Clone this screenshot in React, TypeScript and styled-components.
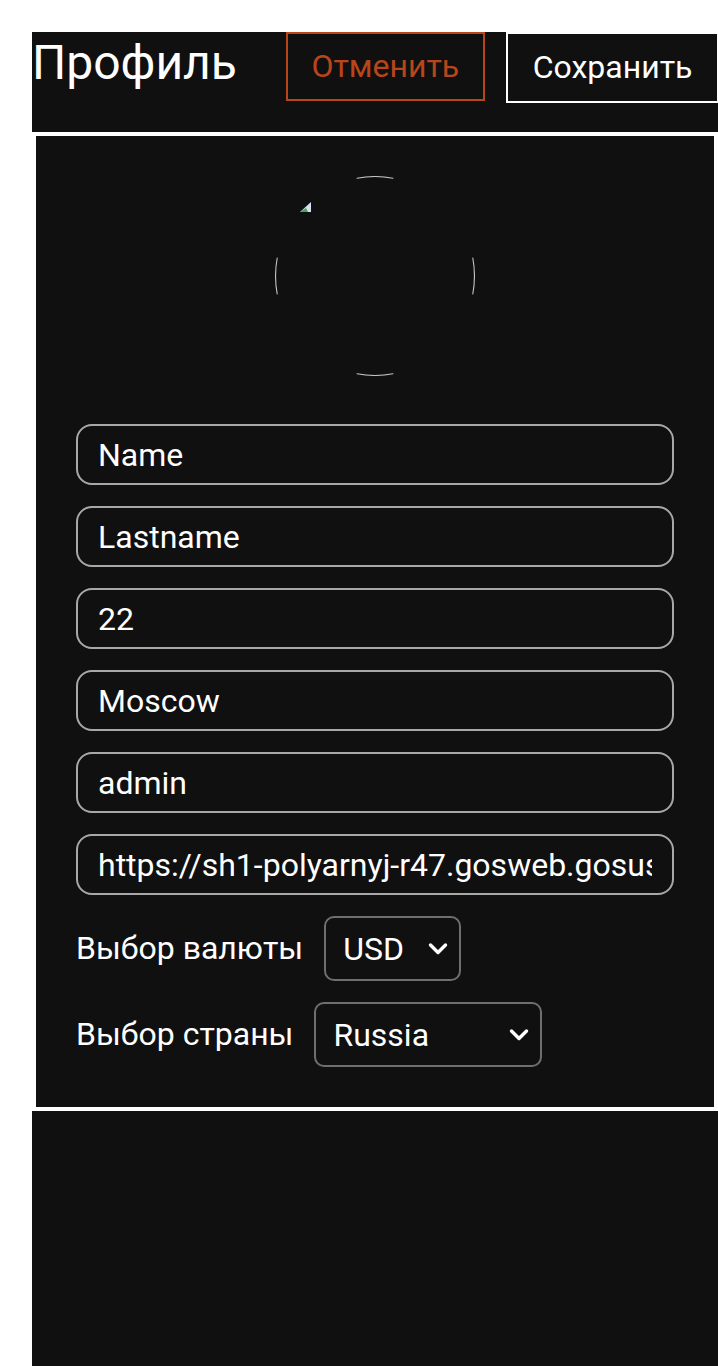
import React from "react";
import styled, { createGlobalStyle } from "styled-components";

const Global = createGlobalStyle`
  html, body { margin: 0; padding: 0; background: #ffffff; overflow-x: hidden; }
  body { font-family: Roboto, "Noto Sans", Arial, sans-serif; }
  * { box-sizing: border-box; }
`;

const Page = styled.div`
  padding: 32px 0 0 32px;
  display: flex;
  flex-direction: column;
`;

const Header = styled.header`
  height: 100px;
  background: #101010;
  display: flex;
  align-items: flex-start;
`;

const Title = styled.h1`
  margin: 3px 49px 0 0;
  font-size: 48px;
  font-weight: 400;
  line-height: 56px;
  color: #ffffff;
  white-space: nowrap;
`;

const HeaderButton = styled.button<{ $variant: "cancel" | "save" }>`
  flex: none;
  margin: 0 0 0 ${(p) => (p.$variant === "save" ? "21px" : "0")};
  padding: ${(p) => (p.$variant === "save" ? "15px 25px" : "14px 23.5px")};
  height: ${(p) => (p.$variant === "save" ? "71px" : "69px")};
  font-family: Roboto, "Noto Sans", Arial, sans-serif;
  font-size: 32px;
  line-height: 37px;
  font-weight: 400;
  background: #101010;
  color: ${(p) => (p.$variant === "save" ? "#ffffff" : "#b9451a")};
  border: 2px solid ${(p) => (p.$variant === "save" ? "#ffffff" : "#b9451a")};
  border-radius: 0;
  white-space: nowrap;
`;

const Panel = styled.main`
  margin: 4px 4px 0 4px;
  background: #101010;
  padding: 40px;
  display: flex;
  flex-direction: column;
  align-items: stretch;
`;

const AvatarWrap = styled.div`
  width: 200px;
  height: 200px;
  align-self: center;
  margin-bottom: 48px;
  svg { display: block; }
`;

const Fields = styled.div`
  display: flex;
  flex-direction: column;
  gap: 21px;
`;

const TextField = styled.input`
  width: 100%;
  height: 61px;
  padding: 0 20px;
  border: 2px solid #a8a8a8;
  border-radius: 16px;
  background: #101010;
  color: #ffffff;
  font-family: Roboto, "Noto Sans", Arial, sans-serif;
  font-size: 32px;
  outline: none;
`;

const SelectRow = styled.div`
  display: flex;
  align-items: center;
  gap: 21px;
  height: 65px;
`;

const Label = styled.label`
  color: #ffffff;
  font-size: 32px;
  line-height: 37px;
  white-space: nowrap;
`;

const SelectBox = styled.div<{ $width: number }>`
  position: relative;
  width: ${(p) => p.$width}px;
  height: 65px;
  flex: none;
`;

const Select = styled.select`
  appearance: none;
  -webkit-appearance: none;
  width: 100%;
  height: 100%;
  padding: 0 40px 0 17px;
  border: 2px solid #6f6f6f;
  border-radius: 10px;
  background: #101010;
  color: #ffffff;
  font-family: Roboto, "Noto Sans", Arial, sans-serif;
  font-size: 32px;
  outline: none;
`;

const Chevron = styled.svg`
  position: absolute;
  right: 13px;
  top: 50%;
  margin-top: -7px;
  pointer-events: none;
`;

const Footer = styled.div`
  margin-top: 4px;
  height: 300px;
  background: #101010;
`;

const Avatar = () => (
  <svg width="200" height="200" viewBox="0 0 200 200">
    <g fill="none" stroke="#c4c4c4" strokeWidth="1.1" strokeLinecap="round">
      <path d="M82 2.2 A99.4 99.4 0 0 1 118 2.2" />
      <path d="M82 197.8 A99.4 99.4 0 0 0 118 197.8" />
      <path d="M2.2 82 A99.4 99.4 0 0 0 2.2 118" />
      <path d="M197.8 82 A99.4 99.4 0 0 1 197.8 118" />
    </g>
    <polygon points="36,26 36,36 25,36" fill="#d4e2f4" />
    <polygon points="25,36 33,36 31,32" fill="#4aa44a" />
  </svg>
);

const ChevronIcon = () => (
  <Chevron width="20" height="14" viewBox="0 0 20 14">
    <path d="M2.5 3 L10 10.5 L17.5 3" fill="none" stroke="#ffffff" strokeWidth="3.4" strokeLinecap="round" strokeLinejoin="round" />
  </Chevron>
);

const fields = [
  "Name",
  "Lastname",
  "22",
  "Moscow",
  "admin",
  "https://sh1-polyarnyj-r47.gosweb.gosuslugi.ru/",
];

export default function App() {
  return (
    <>
      <Global />
      <Page>
        <Header>
          <Title>Профиль</Title>
          <HeaderButton $variant="cancel">Отменить</HeaderButton>
          <HeaderButton $variant="save">Сохранить</HeaderButton>
        </Header>
        <Panel>
          <AvatarWrap>
            <Avatar />
          </AvatarWrap>
          <Fields>
            {fields.map((v, i) => (
              <TextField key={i} defaultValue={v} />
            ))}
            <SelectRow>
              <Label>Выбор валюты</Label>
              <SelectBox $width={137}>
                <Select defaultValue="USD">
                  <option>USD</option>
                  <option>EUR</option>
                  <option>RUB</option>
                </Select>
                <ChevronIcon />
              </SelectBox>
            </SelectRow>
            <SelectRow>
              <Label>Выбор страны</Label>
              <SelectBox $width={228}>
                <Select defaultValue="Russia">
                  <option>Russia</option>
                  <option>USA</option>
                  <option>Germany</option>
                </Select>
                <ChevronIcon />
              </SelectBox>
            </SelectRow>
          </Fields>
        </Panel>
        <Footer />
      </Page>
    </>
  );
}
